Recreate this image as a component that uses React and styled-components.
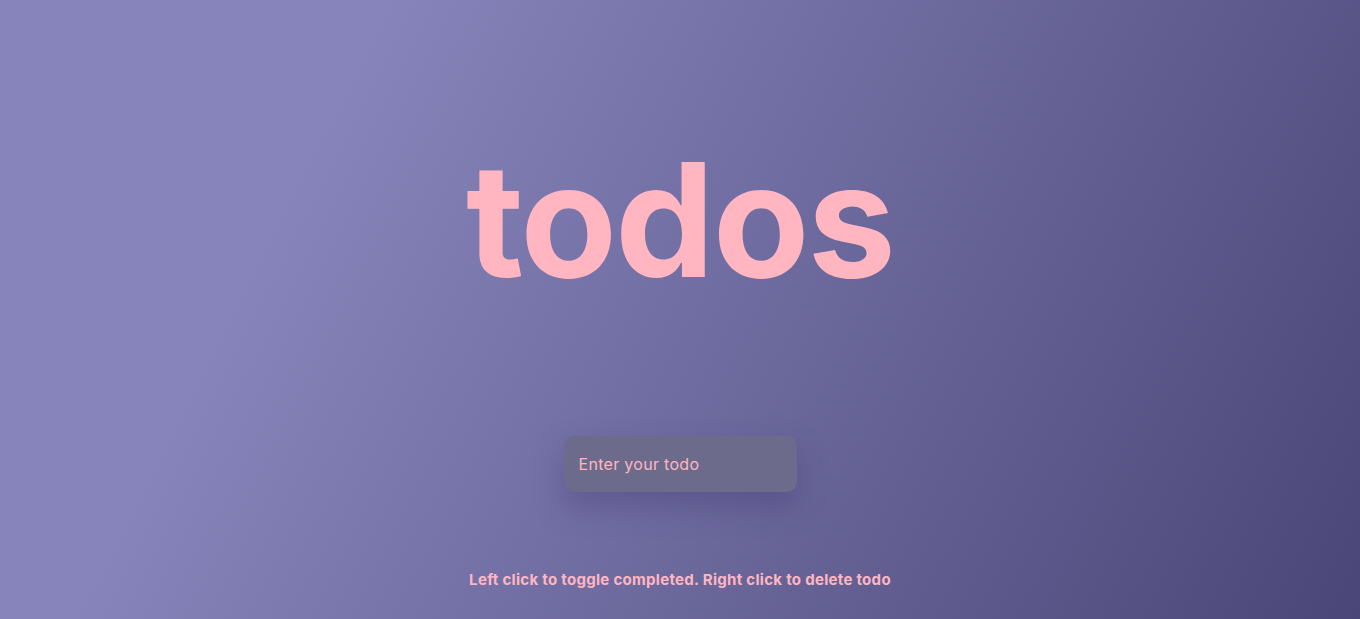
import React from "react";
import styled, { createGlobalStyle } from "styled-components";

const Global = createGlobalStyle`
  html, body { margin: 0; padding: 0; }
  body {
    font-family: "Inter", "Open Sans", sans-serif;
    background: linear-gradient(117deg, #8784bb 23%, #4a4677 100%);
    min-height: 100vh;
  }
  * { box-sizing: border-box; }
`;

const Page = styled.main`
  min-height: 100vh;
  display: flex;
  flex-direction: column;
  align-items: center;
  padding-top: 141px;
`;

const Title = styled.h1`
  margin: 0;
  font-family: "Inter", sans-serif;
  font-weight: 700;
  font-size: 158px;
  line-height: 1;
  letter-spacing: -2px;
  color: #ffb6c1;
`;

const Form = styled.form`
  margin-top: 137px;
  display: flex;
`;

const Input = styled.input`
  width: 233px;
  height: 56px;
  border: none;
  outline: none;
  border-radius: 10px;
  padding: 0 15px;
  background: #6c6b8c;
  color: #ffb6c1;
  font-family: "Inter", sans-serif;
  font-size: 16px;
  letter-spacing: 0.3px;
  box-shadow: 0 14px 30px rgba(60, 55, 110, 0.35);
  &::placeholder { color: #ffb6c1; opacity: 1; }
`;

const Hint = styled.p`
  margin: 78px 0 0;
  font-family: "Inter", sans-serif;
  font-weight: 700;
  font-size: 15px;
  letter-spacing: 0.3px;
  color: #ffb6c1;
`;

export default function App() {
  return (
    <>
      <Global />
      <Page>
        <Title>todos</Title>
        <Form onSubmit={(e) => e.preventDefault()}>
          <Input placeholder="Enter your todo" />
        </Form>
        <Hint>Left click to toggle completed. Right click to delete todo</Hint>
      </Page>
    </>
  );
}
